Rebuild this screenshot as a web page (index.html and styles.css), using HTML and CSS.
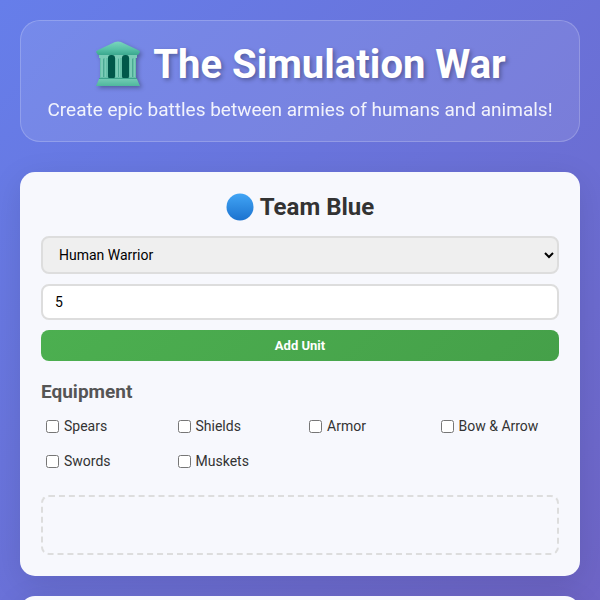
FILE: index.html
```html
<!DOCTYPE html>
<html lang="en">
<head>
<meta charset="utf-8">
<meta name="viewport" content="width=device-width, initial-scale=1">
<title>The Simulation War</title>
<link rel="stylesheet" href="styles.css">
</head>
<body>
<header class="hero">
  <h1 class="hero-title">
    <svg class="temple" viewBox="0 0 48 48" aria-hidden="true">
      <defs>
        <linearGradient id="roof" x1="0" y1="0" x2="0" y2="1"><stop offset="0" stop-color="#7ad6bd"/><stop offset="0.6" stop-color="#55bfa5"/><stop offset="1" stop-color="#3aa78e"/></linearGradient>
        <linearGradient id="base" x1="0" y1="0" x2="0" y2="1"><stop offset="0" stop-color="#72cbb3"/><stop offset="1" stop-color="#4fb79d"/></linearGradient>
      </defs>
      <path fill="#64c0a8" d="M6 15h36v24H6z"/>
      <path fill="#7accb6" d="M5 15h38v3H5z"/>
      <path fill="#7bcdb7" d="M7 18h2v19H7zM11 18h1v19h-1zM22 18h2v19h-2zM25 18h1v19h-1zM36 18h2v19h-2zM40 18h1v19h-1z"/>
      <path fill="#4aa993" d="M9 19h1v18H9zM24 19h1v18h-1zM38 19h1v18h-1z"/>
      <rect x="14" y="15" width="7" height="24" rx="3" fill="#00584a"/>
      <rect x="28" y="15" width="7" height="24" rx="3" fill="#00584a"/>
      <path fill="url(#roof)" d="M2 12q0-1 2-2L21 2q3-1 6 0l17 8q2 1 2 2l-2 3H4z"/>
      <path fill="#3da48c" d="M5 38h38v1H5z"/>
      <path fill="url(#base)" d="M5 39h38l3 7H2z"/>
    </svg>
    The Simulation War
  </h1>
  <p class="hero-text">Create epic battles between armies of humans and animals!</p>
</header>
<main class="teams">
  <section class="card">
    <h2 class="team-title">
      <svg class="dot" viewBox="0 0 28 28" aria-hidden="true">
        <defs><linearGradient id="blue" x1="0" y1="0" x2="0" y2="1"><stop offset="0" stop-color="#42a5f5"/><stop offset="1" stop-color="#1b72cf"/></linearGradient></defs>
        <circle cx="14" cy="14" r="13.5" fill="url(#blue)"/>
      </svg>
      Team Blue
    </h2>
    <form class="unit-form">
      <select class="field" aria-label="Unit type"><option>Human Warrior</option></select>
      <input class="field" type="number" value="5" min="1" aria-label="Unit count">
      <button class="add" type="button">Add Unit</button>
    </form>
    <h3 class="sub-title">Equipment</h3>
    <div class="equipment">
      <label class="option"><input type="checkbox">Spears</label>
      <label class="option"><input type="checkbox">Shields</label>
      <label class="option"><input type="checkbox">Armor</label>
      <label class="option"><input type="checkbox">Bow &amp; Arrow</label>
      <label class="option"><input type="checkbox">Swords</label>
      <label class="option"><input type="checkbox">Muskets</label>
    </div>
    <div class="army"></div>
  </section>
  <section class="card"></section>
</main>
</body>
</html>
```
FILE: styles.css
```css
* {
  box-sizing: border-box;
  margin: 0;
}

body {
  height: 100vh;
  overflow: hidden;
  padding: 20px;
  background: linear-gradient(135deg, #667eea 0%, #764ba2 200%);
  color: #333;
  font-family: Roboto, sans-serif;
  font-size: 16px;
}

.hero {
  margin-bottom: 30px;
  padding: 20px;
  border: 1px solid rgba(255, 255, 255, 0.2);
  border-radius: 20px;
  background: rgba(255, 255, 255, 0.1);
  color: #fff;
  text-align: center;
}

.hero-title {
  display: flex;
  align-items: center;
  justify-content: center;
  gap: 11px;
  margin-bottom: 12px;
  font-size: 40px;
  line-height: 45px;
  text-shadow: 2px 2px 4px rgba(0, 0, 0, 0.3);
}

.temple {
  width: 48px;
  height: 48px;
  margin: -1px 0;
  filter: drop-shadow(2px 2px 2px rgba(0, 0, 0, 0.3));
}

.hero-text {
  font-size: 19px;
  line-height: 22px;
  opacity: 0.9;
}

.teams {
  display: grid;
  gap: 20px;
}

.card {
  min-height: 60px;
  padding: 21px;
  border-radius: 15px;
  background: #f7f8fd;
  box-shadow: 0 8px 32px rgba(0, 0, 0, 0.1);
}

.team-title {
  display: flex;
  align-items: center;
  justify-content: center;
  gap: 6px;
  margin-bottom: 15px;
  font-size: 24px;
  line-height: 28px;
}

.dot {
  width: 28px;
  height: 28px;
}

.unit-form {
  display: grid;
  gap: 10px;
  margin-bottom: 20px;
}

.field {
  width: 100%;
  padding: 8px 12px;
  border: 2px solid #ddd;
  border-radius: 8px;
  background: #fff;
  color: #000;
  font-family: inherit;
  font-size: 14px;
  line-height: 16px;
  height: 36px;
}

select.field {
  height: 38px;
  background: #efefef;
}

.add {
  padding: 8px 15px;
  border: 0;
  border-radius: 8px;
  background: linear-gradient(135deg, #4caf50, #45a049);
  color: #fff;
  font-family: inherit;
  font-size: 13px;
  font-weight: 700;
  line-height: 15px;
}

.sub-title {
  margin-bottom: 10px;
  color: #555;
  font-size: 19px;
  line-height: 22px;
}

.equipment {
  display: grid;
  grid-template-columns: repeat(auto-fit, minmax(120px, 1fr));
  gap: 8px;
  margin-bottom: 20px;
}

.option {
  display: flex;
  align-items: center;
  gap: 5px;
  padding: 5px;
  font-size: 14px;
  line-height: 17px;
}

.option input {
  width: 13px;
  height: 13px;
}

.army {
  min-height: 60px;
  border: 2px dashed #ddd;
  border-radius: 8px;
}
```
